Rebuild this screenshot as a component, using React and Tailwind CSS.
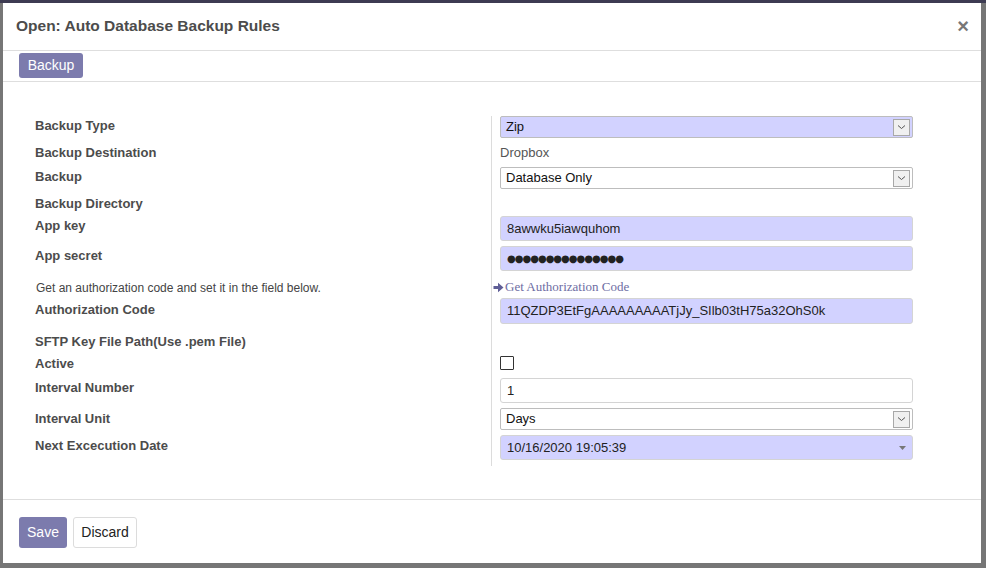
import React from "react";

const font = { fontFamily: '"Liberation Sans", Arial, sans-serif' };

function Chevron() {
  return (
    <div className="w-[17px] h-[17px] mr-[2px] border border-[#a8a8a8] bg-[#f0f0f0] flex items-center justify-center">
      <svg width="9" height="6" viewBox="0 0 9 6">
        <path d="M1 1.5 L4.5 4.5 L8 1.5" fill="none" stroke="#555" strokeWidth="1" />
      </svg>
    </div>
  );
}

function SelectBox({ value, lavender, h = "h-[22px]", mt }) {
  return (
    <div
      className={`${h} ${mt} w-[413px] flex items-center justify-between border border-[#bdbdbd] rounded-[2px] pl-[5px] text-[13px] text-[#111] ${
        lavender ? "bg-[#d2d2ff]" : "bg-white"
      }`}
    >
      <span>{value}</span>
      <Chevron />
    </div>
  );
}

function TextBox({ children, lavender = true, mt, h = "h-[25px]", extra = "" }) {
  return (
    <div
      className={`${h} ${mt} w-[413px] flex items-center border border-[#d4d4d4] rounded-[3px] pl-[6px] text-[13px] text-[#222] ${
        lavender ? "bg-[#d2d2ff]" : "bg-white"
      } ${extra}`}
    >
      {children}
    </div>
  );
}

function Row({ label, h, pt, children, align = "items-start" }) {
  return (
    <div className={`flex ${h}`}>
      <div className={`w-[456px] ${pt} text-[13px] leading-4 font-bold text-[#4c4c4c]`}>{label}</div>
      <div className={`flex-1 border-l border-[#dcdcdc] pl-[8px] flex flex-col ${align}`}>{children}</div>
    </div>
  );
}

export default function App() {
  return (
    <div className="w-[986px] h-[568px] bg-[#767676] border-t-[3px] border-[#3d3b52] overflow-hidden" style={font}>
      <div className="ml-[3px] w-[978px] h-[560px] bg-white flex flex-col">
        {/* Header */}
        <div className="h-[48px] border-b border-[#dedede] flex items-center justify-between pl-[13px] pr-[12px] pb-[1px]">
          <h1 className="text-[15.5px] font-bold text-[#4c4c4c]">Open: Auto Database Backup Rules</h1>
          <span className="text-[20px] font-bold text-[#777] leading-none">×</span>
        </div>

        {/* Toolbar */}
        <div className="h-[31px] border-b border-[#dedede] px-[16px] pt-[2px]">
          <button className="h-[25px] w-[64px] bg-[#7c7bad] text-white text-[14px] rounded-[3px]">Backup</button>
        </div>

        {/* Body */}
        <div className="flex-1 pt-[34px] pl-[32px]">
          <Row label="Backup Type" h="h-[24px]" pt="pt-[2px]">
            <SelectBox value="Zip" lavender />
          </Row>
          <Row label="Backup Destination" h="h-[24px]" pt="pt-[5px]">
            <span className="pt-[5px] text-[13px] leading-4 text-[#555]">Dropbox</span>
          </Row>
          <Row label="Backup" h="h-[27px]" pt="pt-[5px]">
            <SelectBox value="Database Only" mt="mt-[3px]" />
          </Row>
          <Row label="Backup Directory" h="h-[23px]" pt="pt-[5px]">
            <span />
          </Row>
          <Row label="App key" h="h-[29px]" pt="pt-[4px]">
            <TextBox mt="mt-[2px]">8awwku5iawquhom</TextBox>
          </Row>
          <Row label="App secret" h="h-[30px]" pt="pt-[5px]">
            <TextBox mt="mt-[3px]">
              <span className="text-[10px] tracking-[-1px]" style={{ fontFamily: '"DejaVu Sans", sans-serif' }}>
                ●●●●●●●●●●●●●●●
              </span>
            </TextBox>
          </Row>
          <div className="flex h-[23px]">
            <div className="w-[456px] pt-[7px] pl-[1px] text-[12px] leading-4 text-[#444]">
              Get an authorization code and set it in the field below.
            </div>
            <div className="flex-1 border-l border-[#dcdcdc] flex items-start">
              <span
                className="mt-[6px] ml-[1px] flex items-center text-[13px] leading-4 text-[#6e6da3]"
                style={{ fontFamily: '"Liberation Serif", "Times New Roman", serif' }}
              >
                <svg width="11" height="11" viewBox="0 0 11 11" className="mr-[1px]">
                  <path d="M0.5 4 H5 V0.8 L10.5 5.5 L5 10.2 V7 H0.5 Z" fill="#5f5e96" />
                </svg>
                Get Authorization Code
              </span>
            </div>
          </div>
          <Row label="Authorization Code" h="h-[30px]" pt="pt-[6px]">
            <TextBox mt="mt-[2px]" h="h-[26px]">11QZDP3EtFgAAAAAAAAATjJy_SIlb03tH75a32OhS0k</TextBox>
          </Row>
          <Row label="SFTP Key File Path(Use .pem File)" h="h-[28px]" pt="pt-[8px]">
            <span />
          </Row>
          <Row label="Active" h="h-[20px]" pt="pt-[2px]">
            <div className="mt-[2px] w-[14px] h-[14px] border border-[#333] rounded-[1px] bg-white" />
          </Row>
          <Row label="Interval Number" h="h-[31px]" pt="pt-[6px]">
            <TextBox mt="mt-[4px]" lavender={false} extra="border-[#cfcfcf]">1</TextBox>
          </Row>
          <Row label="Interval Unit" h="h-[27px]" pt="pt-[6px]">
            <SelectBox value="Days" mt="mt-[3px]" />
          </Row>
          <Row label="Next Excecution Date" h="h-[34px]" pt="pt-[6px]">
            <TextBox mt="mt-[3px]" extra="justify-between pr-[6px]">
              <span>10/16/2020 19:05:39</span>
              <svg width="7" height="4" viewBox="0 0 7 4">
                <path d="M0 0 H7 L3.5 4 Z" fill="#777" />
              </svg>
            </TextBox>
          </Row>
        </div>

        {/* Footer */}
        <div className="h-[64px] border-t border-[#dedede] flex items-start gap-[6px] px-[16px] pt-[17px]">
          <button className="h-[31px] w-[48px] bg-[#7c7bad] text-white text-[14px] rounded-[3px]">Save</button>
          <button className="h-[31px] w-[64px] bg-white border border-[#dcdcdc] text-[#222] text-[14px] rounded-[3px]">
            Discard
          </button>
        </div>
      </div>
    </div>
  );
}
